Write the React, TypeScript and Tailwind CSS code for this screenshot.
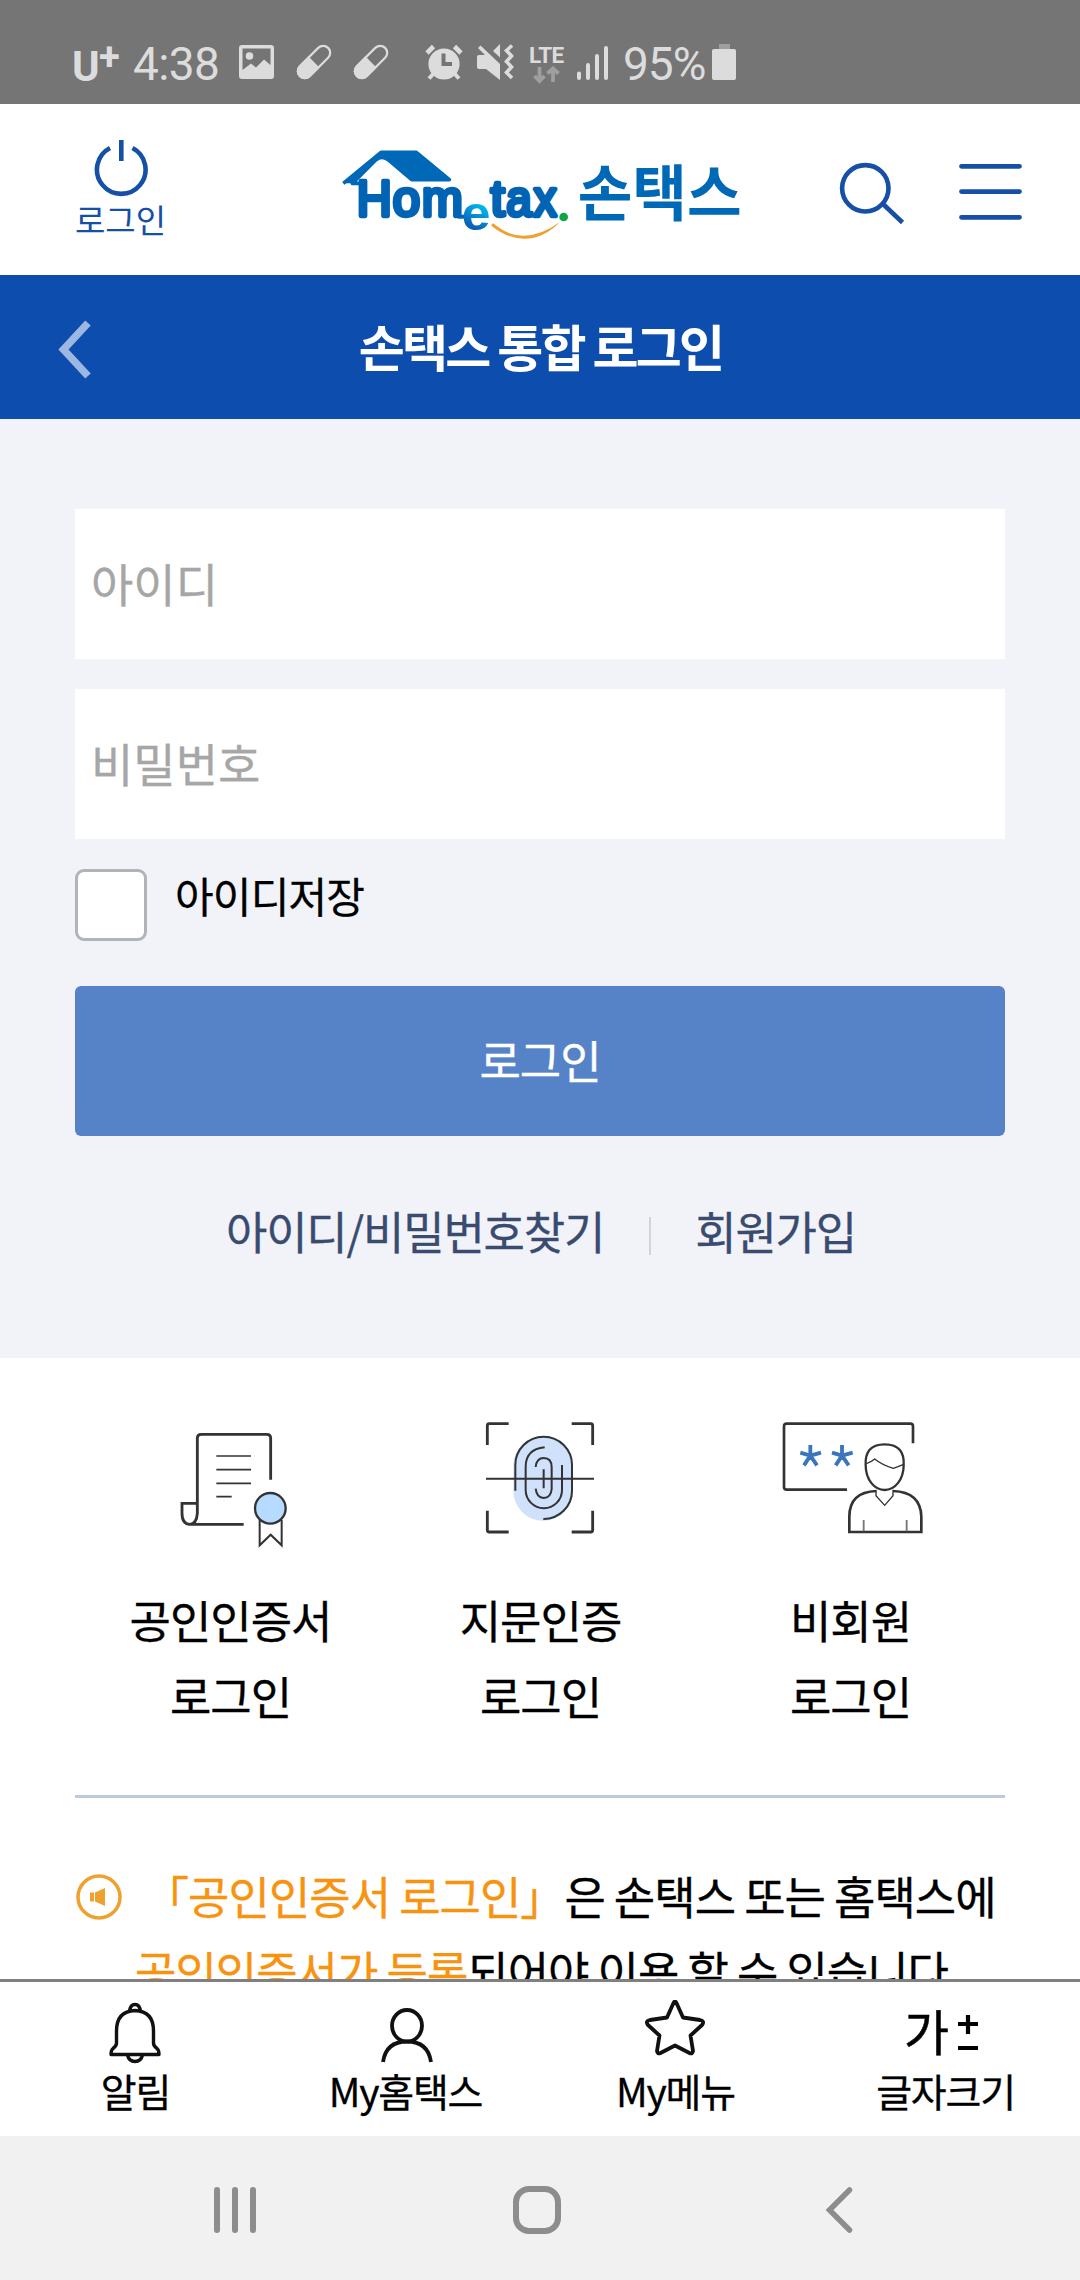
import React from 'react';

const LoginMethods = [
  { id: 'cert', name: '공인인증서' },
  { id: 'finger', name: '지문인증' },
  { id: 'guest', name: '비회원' },
];

const BottomMenus = [
  { id: 'bell', name: '알림' },
  { id: 'my', name: 'My홈택스' },
  { id: 'star', name: 'My메뉴' },
  { id: 'font', name: '글자크기' },
];

const Pill = ({ className }: { className?: string }) => (
  <svg className={className} width="36" height="36" viewBox="0 0 36 36" fill="none">
    <g transform="rotate(45 18 18)">
      <rect x="11" y="-2" width="14" height="40" rx="7" stroke="#dcdcdc" strokeWidth="2.2" />
      <path d="M10 18H26V31a8 8 0 0 1-16 0Z" fill="#dcdcdc" />
    </g>
  </svg>
);

const StatusBar = () => (
  <div className="flex h-[104px] items-start bg-[#757575] pt-[44px] font-['Roboto',sans-serif] text-[#dcdcdc]">
    <div className="ml-[72px] flex h-9 w-[61px] font-bold leading-9">
      <span className="mt-[5px] w-[27px] text-[42px]">U</span>
      <span className="-mt-[5px] text-[38px]">+</span>
    </div>
    <span className="mt-[2px] w-[106px] text-[46px] leading-9 tracking-[-0.6px]">4:38</span>
    <svg className="mt-px" width="35" height="35" viewBox="0 0 35 35">
      <path
        fillRule="evenodd"
        fill="#dcdcdc"
        d="M3 0H32a3 3 0 0 1 3 3V31a3 3 0 0 1-3 3H3a3 3 0 0 1-3-3V3a3 3 0 0 1 3-3ZM3.500 3.500V25L12 18.500 17 22.500 25 14.500 31.500 20V3.500Z"
      />
      <circle cx="10.500" cy="11" r="3.800" fill="#dcdcdc" />
    </svg>
    <Pill className="ml-[22px]" />
    <Pill className="ml-[21px]" />
    <svg className="ml-[36px]" width="38" height="36" viewBox="0 0 38 36">
      <path d="M2 9 8.500 2.500M36 9 29.500 2.500" stroke="#dcdcdc" strokeWidth="4.600" />
      <path d="M4 34.500 9 29M34 34.500 29 29" stroke="#dcdcdc" strokeWidth="4" />
      <circle cx="19" cy="20" r="15.600" fill="#dcdcdc" />
      <path d="M18.500 9.500V20H27" stroke="#757575" strokeWidth="4" fill="none" />
    </svg>
    <svg className="ml-[14px]" width="38" height="36" viewBox="0 0 38 36">
      <path d="M0 13a2 2 0 0 1 2-2H8L1 4 3.500 1.500 23 20V36L9 25H2a2 2 0 0 1-2-2Z" fill="#dcdcdc" />
      <path d="M16 7 23 0V13.500Z" fill="#dcdcdc" />
      <path d="M35 1.500 29.500 6.500 34.500 12 29.500 17.500 34.500 23 29.500 28.500 35 34" fill="none" stroke="#dcdcdc" strokeWidth="3.600" />
    </svg>
    <div className="ml-[14px] flex w-[48px] flex-col">
      <span className="mt-[2px] h-[18px] text-[22.5px] font-bold leading-[18px] tracking-[-0.5px]">LTE</span>
      <svg className="ml-[4px] mt-[2px]" width="27" height="18" viewBox="0 0 27 18">
        <path d="M6.500 1V14M1.500 10 6.500 15 11.500 10M20 16V3M14.500 7.500 20 2.500 25.500 7.500" fill="none" stroke="#9f9f9f" strokeWidth="3.800" />
      </svg>
    </div>
    <svg width="32" height="36" viewBox="0 0 32 36">
      <path d="M2 29.500V34M11 21V34M20 12V34M29 4V34" stroke="#dcdcdc" strokeWidth="4" strokeLinecap="round" />
    </svg>
    <span className="ml-[14px] mt-[2px] w-[89px] text-[46px] leading-9 tracking-[-1px]">95%</span>
    <svg width="24" height="36" viewBox="0 0 24 36">
      <rect x="7" y="0" width="11" height="6" fill="#9f9f9f" />
      <rect y="5" width="24" height="31" rx="2" fill="#dcdcdc" />
    </svg>
  </div>
);

const Logo = () => (
  <svg className="absolute left-[340px] top-[45px] overflow-visible" width="404" height="97" viewBox="60 88 1212 291">
    <defs>
      <linearGradient id="eGradient" gradientUnits="userSpaceOnUse" x1="490" y1="255" x2="450" y2="325">
        <stop offset="0.100" stopColor="#00b4ec" />
        <stop offset="0.900" stopColor="#0a62b6" />
      </linearGradient>
    </defs>
    <path
      d="M70 191 183 98H289L388 180H275L207 122Q187 104 167 121L97 191H128"
      fill="#0069b7"
      stroke="#0069b7"
      strokeWidth="11"
      strokeLinejoin="round"
    />
    <g fontFamily="Liberation Sans, sans-serif" fontSize="148" fill="#0063b3" stroke="#0063b3" strokeWidth="13" strokeLinejoin="round">
      <text x="110" y="290" textLength="105" lengthAdjust="spacingAndGlyphs">H</text>
      <text x="218" y="290" textLength="82" lengthAdjust="spacingAndGlyphs">o</text>
      <text x="306" y="290" textLength="122" lengthAdjust="spacingAndGlyphs">m</text>
      <text x="512" y="290" textLength="42" lengthAdjust="spacingAndGlyphs">t</text>
      <text x="559" y="290" textLength="76" lengthAdjust="spacingAndGlyphs">a</text>
      <text x="641" y="290" textLength="68" lengthAdjust="spacingAndGlyphs">x</text>
    </g>
    <path d="M414 291H440" stroke="#0063b3" strokeWidth="12" />
    <text x="425" y="330" fontFamily="Liberation Sans, sans-serif" fontSize="146" fontWeight="bold" fill="url(#eGradient)" textLength="86" lengthAdjust="spacingAndGlyphs">e</text>
    <path d="M515 313Q520 309 526 316 610 385 720 307 670 358 612 357 560 356 515 319Z" fill="#f0a030" />
    <circle cx="731" cy="292" r="13" fill="#10a443" />
    <text x="773" y="288" fontFamily="Noto Sans CJK KR, sans-serif" fontSize="184" fontWeight="bold" fill="#0069b7" textLength="492" lengthAdjust="spacingAndGlyphs">손택스</text>
  </svg>
);

const Header = () => (
  <header className="relative flex h-[171px] items-start justify-between bg-white text-[#1650a6]">
    <div className="flex w-[241px] flex-col items-center pt-[34px]">
      <svg width="56" height="60" viewBox="0 0 56 60" fill="none" stroke="#1650a6" strokeWidth="4.600">
        <path d="M17 10A24.300 24.300 0 1 0 39.500 10" />
        <path d="M28.300 2V23" />
      </svg>
      <span className="-mt-[4px] text-[33px] leading-[50px]">로그인</span>
    </div>
    <Logo />
    <div className="flex pr-[56px] pt-[56px]">
      <svg width="68" height="66" viewBox="0 0 68 66" fill="none" stroke="#1650a6" strokeWidth="4.600">
        <circle cx="28.300" cy="28.300" r="23.200" />
        <path d="M46 44 65.500 62.500" />
      </svg>
      <svg className="ml-[51px]" width="68" height="66" viewBox="0 0 68 66" stroke="#1650a6" strokeWidth="4.800" strokeLinecap="round">
        <path d="M5.500 6.300H63.500M5.500 31.600H63.500M5.500 57.300H63.500" />
      </svg>
    </div>
  </header>
);

const MethodIcon = ({ id }: { id: string }) => {
  if (id === 'cert') {
    return (
      <svg width="150" height="135" viewBox="15 75 450 405" fill="none" stroke="#333" strokeWidth="8.500">
        <path d="M362 269V145Q362 133 350 133H154Q142 133 142 145V370Q140 402 119 403 96 402 96 370V340H140M117 403H281" />
        <path d="M199 198H303M199 239H303M199 280H303M199 320H245" strokeWidth="5" />
        <path d="M329 390V466L362 434 395 466V390" strokeWidth="6" />
        <circle cx="361" cy="355" r="46" fill="#b7dbff" strokeWidth="7" />
      </svg>
    );
  }
  if (id === 'finger') {
    return (
      <svg width="150" height="135" viewBox="945 75 450 405" fill="none" stroke="#333" strokeWidth="6">
        <rect x="1090" y="138" width="179" height="254" rx="89" fill="#cfe1fb" stroke="none" />
        <path d="M1076 101H1018Q1012 101 1012 107V165M1265 101H1322Q1328 101 1328 107V165M1012 362V420Q1012 426 1018 426H1076M1328 362V420Q1328 426 1322 426H1265" strokeWidth="8.500" />
        <path d="M1096 302V225A85 85 0 0 1 1266 225V302A85 85 0 0 1 1180 387" />
        <path d="M1184 172Q1127 178 1127 230V300A54 54 0 0 0 1236 300V225" />
        <path d="M1157 231Q1160 204 1181 204 1205 204 1205 232V297Q1203 323 1181 324 1160 323 1157 296" />
        <path d="M1181 238V295M1008 266H1332" />
      </svg>
    );
  }
  return (
    <svg width="150" height="135" viewBox="105 75 450 405" fill="none" stroke="#333" strokeWidth="8">
      <path d="M519 160V109Q519 101 511 101H140Q132 101 132 109V291Q132 299 140 299H321" />
      <path d="M211 165V197L181 188M211 197 243 188M211 197 192 226M211 197 231 226M306 165V197L276 188M306 197 338 188M306 197 287 226M306 197 326 226" stroke="#3a75bd" strokeWidth="11.500" />
      <path d="M409 303Q328 306 328 380V426H544V380Q542 306 459 303" />
      <path d="M434 163C390 163 375 187 377 225 377 270 404 300 434 300S491 270 491 225C493 187 478 163 434 163Z" strokeWidth="7" />
      <path d="M379 221Q394 216 404 207C420 220 440 229 460 235Q474 230 491 223M408 300V317L434 346 459 317V300" strokeWidth="4" />
      <path d="M371 390V424M500 390V424" strokeWidth="5.500" stroke="#777" />
    </svg>
  );
};

const MenuIcon = ({ id }: { id: string }) => {
  if (id === 'bell') {
    return (
      <svg width="64" height="66" viewBox="0 0 64 66" fill="none" stroke="#111" strokeWidth="3.400" strokeLinejoin="round">
        <path d="M26.500 12Q27 4.500 32 4.500T37.500 12" />
        <path d="M32 10.500C19 11 13.500 19 13.500 31V43Q13.500 46 10 48.500 8 50 8 54.500H56Q56 50 54 48.500 50.500 46 50.500 43V31C50.500 19 45 11 32 10.500Z" />
        <path d="M24.500 55Q26 61.500 32 61.500T39.500 55" />
      </svg>
    );
  }
  if (id === 'my') {
    return (
      <svg className="ml-[4px]" width="64" height="66" viewBox="0 0 64 66" fill="none" stroke="#111" strokeWidth="3.800">
        <ellipse cx="32" cy="25.800" rx="15" ry="15.800" />
        <path d="M8 62Q11 41.500 32 41.500T56 62" />
      </svg>
    );
  }
  if (id === 'star') {
    return (
      <svg width="64" height="66" viewBox="0 0 64 66" fill="none" stroke="#111" strokeWidth="3.800" strokeLinejoin="round">
        <path d="M30.500 3Q32 0 33.500 3L40 17.500 57 20Q62 21 59 25L47.500 35.500 50 51Q49.500 54.500 46.500 53L32 45.500 17.500 53Q14.500 54.500 14 51L16.500 35.500 5 25Q2 21 7 20L24 17.500Z" />
      </svg>
    );
  }
  return (
    <div className="flex h-[66px] w-[82px] items-center text-black">
      <span className="-mt-[7px] text-[49px] leading-[50px] [-webkit-text-stroke:0.5px_black]">가</span>
      <svg className="ml-[8px] shrink-0" width="22" height="48" viewBox="0 0 22 48" stroke="#000" strokeWidth="4.200">
        <path d="M1 15H21M11 6V25M1 39H21" />
      </svg>
    </div>
  );
};

const App: React.FC = () => {
  return (
    <div className="flex h-[2280px] w-[1080px] flex-col overflow-hidden bg-white font-['Noto_Sans_CJK_KR',sans-serif] text-black">
      <StatusBar />
      <Header />

      {/* Page title */}
      <div className="flex h-[144px] items-center justify-between bg-[#0d4dae] px-[57px]">
        <svg className="mt-[3px]" width="36" height="60" viewBox="0 0 36 60" fill="none" stroke="#9db7e3" strokeWidth="7.500">
          <path d="M31 4 6.500 30.500 31 57" />
        </svg>
        <h1 className="pb-[3px] pl-px text-[50px] font-bold tracking-[-2.7px] text-white">손택스 통합 로그인</h1>
        <div className="w-9" />
      </div>

      <main className="h-[1560px] overflow-hidden [-webkit-text-stroke:0.3px]">
        {/* Login form */}
        <section className="h-[939px] bg-[#f2f3f9] px-[75px] pt-[90px]">
          <div className="flex flex-col gap-[30px]">
            <input className="h-[150px] bg-white px-[16px] pb-[5px] text-[46px] placeholder:text-[#a6a6a6]" placeholder="아이디" />
            <input className="h-[150px] bg-white px-[16px] pb-[5px] text-[46px] placeholder:text-[#a6a6a6]" placeholder="비밀번호" />
          </div>
          <label className="mt-[30px] flex h-[72px] items-start">
            <span className="h-[72px] w-[72px] rounded-[9px] border-[3px] border-[#b0b3bc] bg-white" />
            <span className="ml-[28px] text-[42px] leading-[52px] tracking-[-0.8px]">아이디저장</span>
          </label>
          <button className="mt-[45px] h-[150px] w-full rounded-[6px] bg-[#5683c7] pb-[3px] text-[45px] tracking-[-1px] text-white">로그인</button>
          <div className="mt-[58px] flex items-center justify-center pl-[2px] text-[45px] leading-[74px] tracking-[-1.2px] text-[#3a4b70]">
            <span>아이디/비밀번호찾기</span>
            <span className="ml-[45px] mr-[44px] mt-[9px] h-[38px] w-[2px] bg-[#d0d4de]" />
            <span>회원가입</span>
          </div>
        </section>

        {/* Other login methods */}
        <section className="mx-[75px] grid h-[440px] grid-cols-3 border-b-[3px] border-[#bccadb] pt-[57px]">
          {LoginMethods.map(method => (
            <div key={method.id} className="flex flex-col items-center">
              <MethodIcon id={method.id} />
              <p className="mt-[32px] pl-px text-center text-[45px] leading-[76px] tracking-[-1px]">
                {method.name}
                <br />
                로그인
              </p>
            </div>
          ))}
        </section>

        <section className="flex px-[75px] pt-[60px]">
          <svg className="mt-[15px] shrink-0" width="48" height="48" viewBox="0 0 48 48">
            <circle cx="24" cy="24" r="21" fill="none" stroke="#efa12e" strokeWidth="3.500" />
            <path d="M15 19.500H19V28.500H15ZM20 19.500 30 15V33L20 28.500Z" fill="#efa12e" />
          </svg>
          <p className="ml-[12px] whitespace-pre text-[45px] leading-[75px] tracking-[-1px]">
            <span className="text-[#f7930f]">{' 「공인인증서 로그인」'}</span>은 손택스 또는 홈택스에
            <br />
            <span className="text-[#f7930f]">공인인증서가 등록</span>되어야 이용 할 수 있습니다.
          </p>
        </section>
      </main>

      {/* Bottom menu */}
      <nav className="grid h-[157px] grid-cols-4 border-t-[3px] border-[#808080] bg-white">
        {BottomMenus.map(menu => (
          <div key={menu.id} className="flex flex-col items-center pt-[18px]">
            <MenuIcon id={menu.id} />
            <span className="-mt-px pl-px text-[39px] leading-[50px] tracking-[-1.2px] [-webkit-text-stroke:0.3px]">{menu.name}</span>
          </div>
        ))}
      </nav>

      <div className="flex h-[144px] items-center bg-[#f1f1f1] pl-[210px]">
        <svg className="mt-[4px]" width="50" height="50" viewBox="0 0 50 50" stroke="#8d8d8d" strokeWidth="6" strokeLinecap="round">
          <path d="M7 5V45M25 5V45M43 5V45" />
        </svg>
        <svg className="ml-[252px] mt-[4px]" width="50" height="50" viewBox="0 0 50 50" fill="none">
          <rect x="4" y="4" width="42" height="42" rx="13" stroke="#8d8d8d" strokeWidth="6" />
        </svg>
        <svg className="ml-[252px] mt-[4px]" width="50" height="50" viewBox="0 0 50 50" fill="none" stroke="#8d8d8d" strokeWidth="5.500" strokeLinecap="round">
          <path d="M35.500 5 15.500 25 35.500 45" />
        </svg>
      </div>
    </div>
  );
};

export default App;
